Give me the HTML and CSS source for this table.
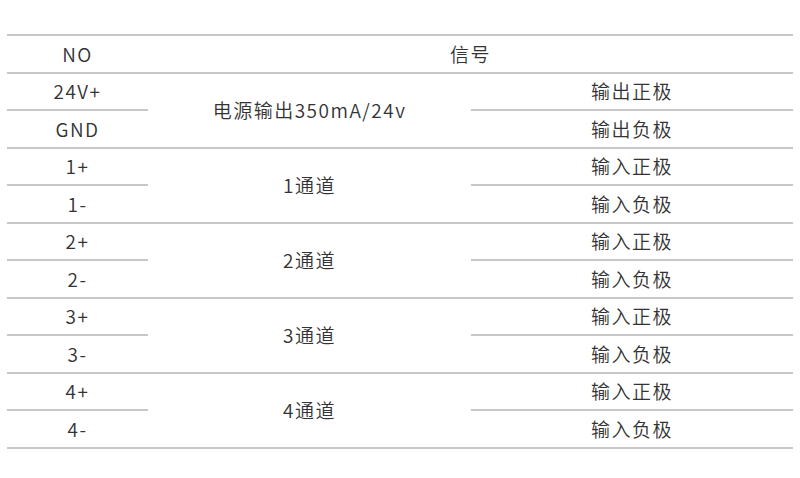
FILE: index.html
```html
<!DOCTYPE html>
<html lang="zh-CN">
<head>
<meta charset="utf-8">
<title>信号表</title>
<link rel="stylesheet" href="styles.css">
</head>
<body>
<div class="page">
  <table class="pin-table">
    <colgroup>
      <col class="c1"><col class="c2"><col class="c3">
    </colgroup>
    <tr><td>NO</td><td colspan="2">信号</td></tr>
    <tr><td>24V+</td><td rowspan="2">电源输出350mA/24v</td><td>输出正极</td></tr>
    <tr><td>GND</td><td>输出负极</td></tr>
    <tr><td>1+</td><td rowspan="2">1通道</td><td>输入正极</td></tr>
    <tr><td>1-</td><td>输入负极</td></tr>
    <tr><td>2+</td><td rowspan="2">2通道</td><td>输入正极</td></tr>
    <tr><td>2-</td><td>输入负极</td></tr>
    <tr><td>3+</td><td rowspan="2">3通道</td><td>输入正极</td></tr>
    <tr><td>3-</td><td>输入负极</td></tr>
    <tr><td>4+</td><td rowspan="2">4通道</td><td>输入正极</td></tr>
    <tr><td>4-</td><td>输入负极</td></tr>
  </table>
</div>
</body>
</html>
```

FILE: styles.css
```css
html, body {
  margin: 0;
  padding: 0;
  background: #fff;
}
.page {
  padding: 34px 7px 0 7px;
}
.pin-table {
  width: 786px;
  border-collapse: collapse;
  table-layout: fixed;
  font-family: "Noto Sans CJK SC", "Noto Sans", sans-serif;
  font-size: 19px;
  font-weight: 350;
  letter-spacing: 1.5px;
  color: #333;
  border-top: 2px solid #c8c8c8;
}
.c1 { width: 141px; }
.c2 { width: 323px; }
.c3 { width: 322px; }
.pin-table tr {
  height: 37.5px;
}
.pin-table td {
  padding: 0;
  text-align: center;
  vertical-align: middle;
  border-bottom: 2px solid #c8c8c8;
  line-height: 20px;
}
```
